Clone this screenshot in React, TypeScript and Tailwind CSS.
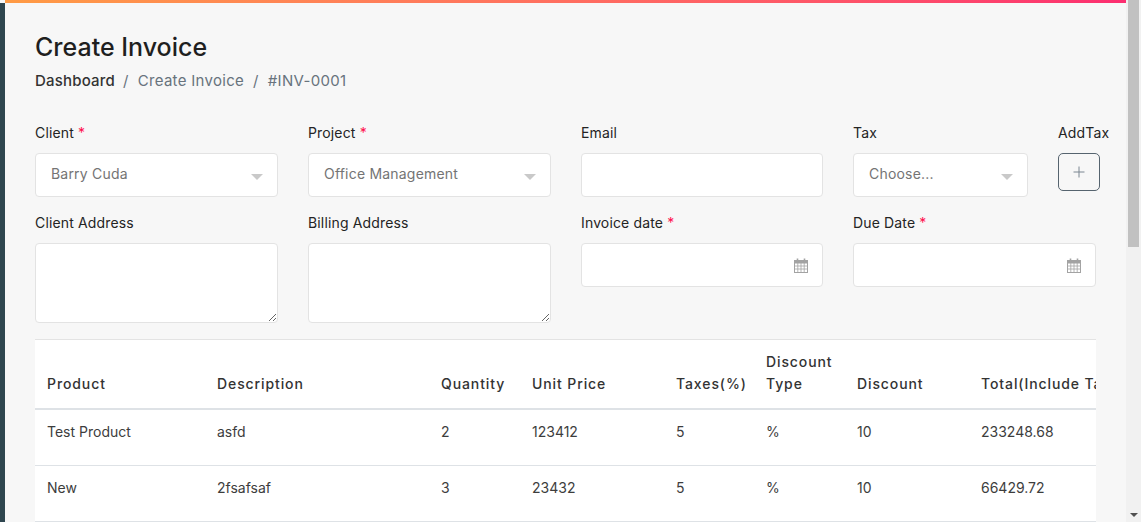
import React from "react";

const Req = () => <span className="text-[#ff0d4d]"> *</span>;

function Label({ children }: { children: React.ReactNode }) {
  return <label className="block text-[14px] leading-[21px] mb-[10px] tracking-[0.15px] whitespace-nowrap text-[#242424]">{children}</label>;
}

function Select({ value }: { value: string }) {
  return (
    <div className="h-[44px] bg-white border border-[#e3e3e3] rounded-[4px] flex items-center justify-between pl-[15px] pr-[14px] text-[14px] tracking-[0.2px] text-[#747474]">
      <span className="mb-[3px]">{value}</span>
      <span className="w-0 h-0 mt-[3px] border-l-[6px] border-r-[6px] border-t-[6px] border-l-transparent border-r-transparent border-t-[#c9c9c9]" />
    </div>
  );
}

function Calendar() {
  return (
    <svg width="14" height="15" viewBox="0 0 14 15" fill="none" stroke="#a3a3a3" strokeWidth="1">
      <rect x="0.5" y="2.5" width="13" height="12" fill="none" />
      <rect x="0.5" y="2.5" width="13" height="2.5" fill="#a3a3a3" />
      <path d="M3.5 0.5v3M10.5 0.5v3" strokeWidth="1.6" />
      <path d="M0.5 8h13M0.5 11h13M3.8 5v9.5M7 5v9.5M10.2 5v9.5" strokeWidth="0.8" />
    </svg>
  );
}

function DateInput() {
  return (
    <div className="h-[44px] bg-white border border-[#e3e3e3] rounded-[4px] flex items-center justify-end pr-[14px]">
      <Calendar />
    </div>
  );
}

const heads: [string, number][] = [
  ["Product", 170],
  ["Description", 224],
  ["Quantity", 91],
  ["Unit Price", 144],
  ["Taxes(%)", 90],
  ["Discount Type", 91],
  ["Discount", 124],
  ["Total(Include Tax)", 170],
];

const rows = [
  ["Test Product", "asfd", "2", "123412", "5", "%", "10", "233248.68"],
  ["New", "2fsafsaf", "3", "23432", "5", "%", "10", "66429.72"],
];

export default function App() {
  return (
    <div className="flex h-[522px] w-full overflow-hidden bg-[#f7f7f7] text-[#242424]" style={{ fontFamily: "Inter, 'Noto Sans', sans-serif" }}>
      <div className="w-[5px] shrink-0 bg-[#2f464f] mt-[3px]" />
      <main className="flex-1 min-w-0 overflow-hidden relative">
        <div className="absolute left-[-5px] right-0 top-0 h-[3px] bg-gradient-to-r from-[#ff9b44] to-[#fc2d70]" />
        <div className="pl-[30px] pr-[30px] pt-[32px]">
          <h3 className="text-[25px] leading-[30px] font-medium text-[#1f1f1f]">Create Invoice</h3>
          <div className="mt-[8px] flex items-center text-[15px] leading-[22px] tracking-[0.3px] text-[#68737d]">
            <span className="font-medium text-[#333333] tracking-[0.2px]">Dashboard</span>
            <span className="ml-[8px] mr-[9px]">/</span>
            <span>Create Invoice</span>
            <span className="mx-[9px]">/</span>
            <span>#INV-0001</span>
          </div>

          <div className="mt-[30px] w-[1061px]">
            <div className="flex gap-[30px]">
              <div className="w-[243px] shrink-0">
                <Label>Client<Req /></Label>
                <Select value="Barry Cuda" />
              </div>
              <div className="w-[243px] shrink-0">
                <Label>Project<Req /></Label>
                <Select value="Office Management" />
              </div>
              <div className="w-[242px] shrink-0">
                <Label>Email</Label>
                <input className="block w-full h-[44px] bg-white border border-[#e3e3e3] rounded-[4px]" />
              </div>
              <div className="w-[175px] shrink-0">
                <Label>Tax</Label>
                <Select value="Choose..." />
              </div>
              <div className="w-[42px] shrink-0">
                <Label>AddTax</Label>
                <button className="w-[42px] h-[38px] border border-[#56646f] rounded-[5px] flex items-center justify-center">
                  <svg width="12" height="12" viewBox="0 0 12 12" stroke="#7b8691" strokeWidth="1"><path d="M6 0.5v11M0.5 6h11" /></svg>
                </button>
              </div>
            </div>

            <div className="flex gap-[30px] mt-[15px]">
              <div className="w-[243px] shrink-0">
                <Label>Client Address</Label>
                <textarea className="block w-full h-[80px] bg-white border border-[#e3e3e3] rounded-[4px]" />
              </div>
              <div className="w-[243px] shrink-0">
                <Label>Billing Address</Label>
                <textarea className="block w-full h-[80px] bg-white border border-[#e3e3e3] rounded-[4px]" />
              </div>
              <div className="w-[242px] shrink-0">
                <Label>Invoice date<Req /></Label>
                <DateInput />
              </div>
              <div className="w-[243px] shrink-0">
                <Label>Due Date<Req /></Label>
                <DateInput />
              </div>
            </div>

            <div className="mt-[16px] overflow-hidden bg-white border-t border-[#e3e3e3]">
              <table className="table-fixed border-collapse w-[1104px] text-[14px]">
                <colgroup>
                  {heads.map(([h, w]) => <col key={h} style={{ width: w }} />)}
                </colgroup>
                <thead>
                  <tr className="h-[69px] border-b-2 border-[#dee2e6]">
                    {heads.map(([h]) => (
                      <th key={h} className="px-[12px] text-left align-bottom pb-[13px] font-medium tracking-[0.9px] leading-[22px] text-[#333333] whitespace-normal">{h === "Total(Include Tax)" ? <span className="whitespace-nowrap">{h}</span> : h}</th>
                    ))}
                  </tr>
                </thead>
                <tbody>
                  {rows.map((r) => (
                    <tr key={r[0]} className="h-[56px] border-b border-[#dee2e6]">
                      {r.map((c, i) => (
                        <td key={i} className="px-[12px] align-top pt-[11px] leading-[21px] text-[#3d3d3d] whitespace-nowrap">{c}</td>
                      ))}
                    </tr>
                  ))}
                </tbody>
              </table>
            </div>
          </div>
        </div>
      </main>
      <div className="w-[15px] shrink-0 bg-[#f1f1f1] flex flex-col">
        <div className="h-[247px] ml-[2px] w-[11px] bg-[#c1c1c1]" />
        <div className="flex-1" />
        <div className="h-[15px] flex items-center justify-center">
          <span className="w-0 h-0 border-l-[4px] border-r-[4px] border-t-[4px] border-l-transparent border-r-transparent border-t-[#505050]" />
        </div>
      </div>
    </div>
  );
}
